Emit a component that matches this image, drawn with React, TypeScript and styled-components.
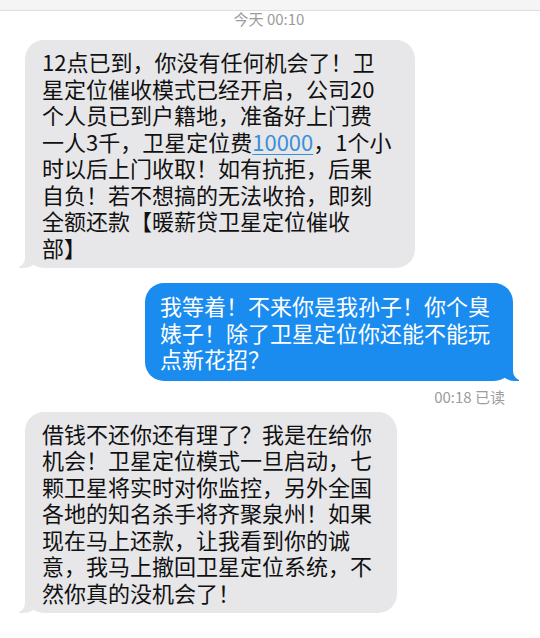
import * as React from 'react'
import styled, { createGlobalStyle } from 'styled-components'

const GlobalStyle = createGlobalStyle`
  html, body {
    margin: 0;
    padding: 0;
    background: #ffffff;
  }
  body {
    font-family: "Noto Sans CJK SC", "Noto Sans", sans-serif;
  }
`

type Side = 'in' | 'out'

type Msg = {
  side: Side
  width: number
  gap: number
  lines: React.ReactNode[]
}

function Link({ children }: { children: React.ReactNode }) {
  return <LinkText>{children}</LinkText>
}

const messages: Msg[] = [
  {
    side: 'in',
    width: 390,
    gap: 13,
    lines: [
      '12点已到，你没有任何机会了！卫',
      '星定位催收模式已经开启，公司20',
      '个人员已到户籍地，准备好上门费',
      <>一人3千，卫星定位费<Link>10000</Link>，1个小</>,
      '时以后上门收取！如有抗拒，后果',
      '自负！若不想搞的无法收拾，即刻',
      '全额还款【暖薪贷卫星定位催收',
      '部】',
    ],
  },
  {
    side: 'out',
    width: 368,
    gap: 15,
    lines: [
      '我等着！不来你是我孙子！你个臭',
      '婊子！除了卫星定位你还能不能玩',
      '点新花招？',
    ],
  },
  {
    side: 'in',
    width: 372,
    gap: 6,
    lines: [
      '借钱不还你还有理了？我是在给你',
      '机会！卫星定位模式一旦启动，七',
      '颗卫星将实时对你监控，另外全国',
      '各地的知名杀手将齐聚泉州！如果',
      '现在马上还款，让我看到你的诚',
      '意，我马上撤回卫星定位系统，不',
      '然你真的没机会了！',
    ],
  },
]

const renderBubble = (m: Msg) => (
  <Bubble $side={m.side} $width={m.width} $gap={m.gap}>
    {m.lines.map((l, i) => <Line key={i}>{l}</Line>)}
  </Bubble>
)

const App = () => (
  <>
    <GlobalStyle />
    <Screen>
      <TopBar />
      <Stamp>今天 00:10</Stamp>
      <Thread>
        {renderBubble(messages[0])}
        {renderBubble(messages[1])}
        <Receipt>00:18 已读</Receipt>
        {renderBubble(messages[2])}
      </Thread>
    </Screen>
  </>
)

const Screen = styled.div`
  width: 540px;
  height: 638px;
  overflow: hidden;
  background: #ffffff;
  display: flex;
  flex-direction: column;
`

const TopBar = styled.div`
  height: 10px;
  background: #f5f5f5;
  border-bottom: 1px solid #dedede;
`

const Stamp = styled.div`
  height: 16px;
  line-height: 16px;
  text-align: center;
  font-size: 15px;
  color: #9c9c9c;
  transform: translateX(-1px);
`

const Thread = styled.div`
  display: flex;
  flex-direction: column;
`

const Bubble = styled.div<{ $side: Side; $width: number; $gap: number }>`
  position: relative;
  box-sizing: border-box;
  width: ${p => p.$width}px;
  margin-top: ${p => p.$gap}px;
  align-self: ${p => (p.$side === 'in' ? 'flex-start' : 'flex-end')};
  margin-left: ${p => (p.$side === 'in' ? '25px' : '0')};
  margin-right: ${p => (p.$side === 'out' ? '27px' : '0')};
  padding: ${p => (p.$side === 'in' ? '8px 17px' : '9px 15px')};
  border-radius: 19px;
  background: ${p => (p.$side === 'in' ? '#e7e7e9' : '#1a8cef')};
  color: ${p => (p.$side === 'in' ? '#111111' : '#ffffff')};
  font-size: 22px;
  line-height: 26.5px;

  &::before {
    content: '';
    position: absolute;
    bottom: 0;
    ${p => (p.$side === 'in' ? 'left: -6px;' : 'right: -6px;')}
    width: 20px;
    height: 18px;
    background: ${p => (p.$side === 'in' ? '#e7e7e9' : '#1a8cef')};
    ${p =>
      p.$side === 'in'
        ? 'border-bottom-right-radius: 16px 14px;'
        : 'border-bottom-left-radius: 16px 14px;'}
  }

  &::after {
    content: '';
    position: absolute;
    bottom: 0;
    ${p => (p.$side === 'in' ? 'left: -26px;' : 'right: -26px;')}
    width: 26px;
    height: 18px;
    background: #ffffff;
    ${p =>
      p.$side === 'in'
        ? 'border-bottom-right-radius: 10px;'
        : 'border-bottom-left-radius: 10px;'}
  }
`

const Line = styled.div`
  white-space: nowrap;
`

const LinkText = styled.span`
  color: #3d8fd8;
  text-decoration: underline;
  text-decoration-thickness: 1px;
  text-underline-offset: 3px;
`

const Receipt = styled.div`
  align-self: flex-end;
  margin-right: 35px;
  margin-top: 7px;
  height: 18px;
  line-height: 18px;
  font-size: 15px;
  color: #9c9c9c;
`

export default App
